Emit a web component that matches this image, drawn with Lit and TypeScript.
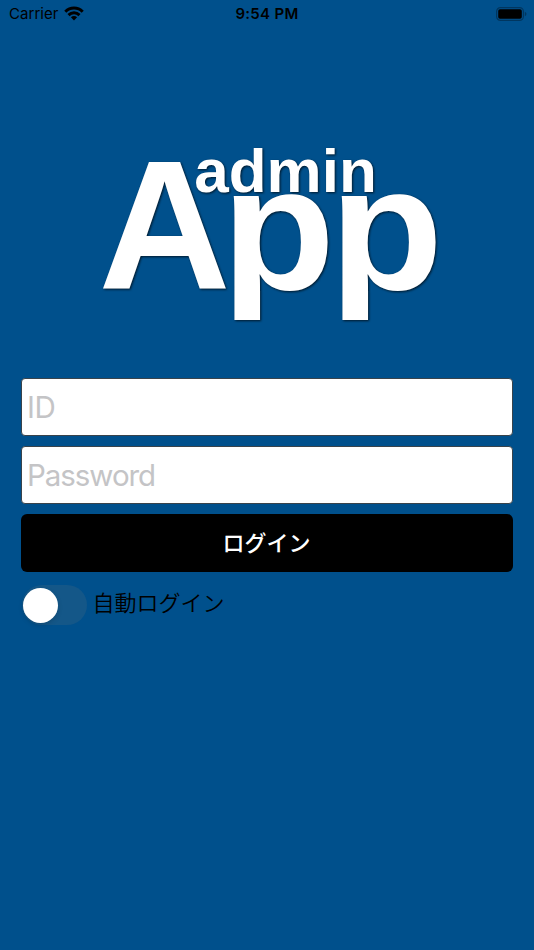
import { LitElement, html, css } from "lit";
import { customElement } from "lit/decorators.js";

@customElement("app-root")
export class AppRoot extends LitElement {
  static styles = css`
    :host {
      display: flex;
      flex-direction: column;
      box-sizing: border-box;
      height: 950px;
      background: #00508c;
      color: #000;
      font-family: Inter, "Noto Sans CJK JP", sans-serif;
    }
    .status {
      display: grid;
      grid-template-columns: 1fr auto 1fr;
      align-items: center;
      height: 28px;
      padding: 0 7px 0 9px;
      font-size: 15px;
      line-height: 28px;
    }
    .carrier {
      display: flex;
      align-items: center;
      gap: 5px;
      letter-spacing: 0.05px;
    }
    .carrier svg {
      margin-bottom: 2px;
    }
    .time {
      margin-right: 2px;
      font-weight: 600;
      letter-spacing: 0.3px;
    }
    .battery {
      justify-self: end;
      margin-bottom: 1px;
    }
    svg {
      display: block;
    }
    .logo {
      margin-top: 92px;
      fill: #fff;
      font-family: "Liberation Sans", sans-serif;
      font-weight: 700;
      filter: drop-shadow(1px 1.5px 1px rgba(0, 0, 0, 0.7));
    }
    .form {
      display: flex;
      flex-direction: column;
      gap: 10.5px;
      margin: 38px 21px 0;
    }
    input {
      box-sizing: border-box;
      width: 100%;
      height: 57.6px;
      margin: 0;
      padding: 0 5px;
      border: 1px solid #39434b;
      border-radius: 4px;
      background: #fff;
      font: 400 29.5px Inter, sans-serif;
      letter-spacing: -1.05px;
      outline: none;
    }
    .id {
      letter-spacing: -0.3px;
    }
    input::placeholder {
      color: #c4c4c6;
      opacity: 1;
    }
    button {
      height: 58px;
      margin: 0;
      padding: 0 1px 5px 0;
      border: 0;
      border-radius: 6px;
      background: #000;
      color: #fff;
      font: 500 22px "Noto Sans CJK JP", sans-serif;
    }
    .auto {
      display: flex;
      align-items: center;
      gap: 6px;
      height: 40px;
      margin: 13px 21.5px 0;
      font: 400 22px/40px "Noto Sans CJK JP", sans-serif;
    }
    .label {
      padding-bottom: 9px;
      font-weight: 350;
    }
    .switch {
      display: flex;
      align-items: center;
      box-sizing: border-box;
      width: 65px;
      height: 40px;
      padding: 0 1.5px;
      border-radius: 20px;
      background: #145788;
    }
    .knob {
      width: 35px;
      height: 35px;
      border-radius: 50%;
      background: #fff;
      box-shadow: 0 2px 5px rgba(0, 0, 0, 0.15);
    }
  `;

  render() {
    return html`
      <div class="status">
        <div class="carrier">
          <span>Carrier</span>
          <svg width="20" height="15" viewBox="0 0 20 15">
            <g fill="none" stroke="#000" stroke-width="3">
              <path d="M1.3 5.7C6.2.8 13.8.8 18.7 5.7" />
              <path d="M4.5 9.1C7.6 6.1 12.4 6.1 15.5 9.1" />
            </g>
            <path d="M6.9 11.3C8.7 9.7 11.3 9.7 13.1 11.3L10 14.5Z" />
          </svg>
        </div>
        <span class="time">9:54 PM</span>
        <svg class="battery" width="31" height="14" viewBox="0 0 31 14">
          <rect x=".6" y=".6" width="26.8" height="12.8" rx="3.8" fill="none" stroke="#00365f" stroke-width="1.2" />
          <rect x="2.2" y="2.2" width="23.6" height="9.6" rx="1.8" />
          <path d="M28.8 4.8Q30.5 5.5 30.5 7T28.8 9.2Z" fill="#00365f" />
        </svg>
      </div>

      <svg class="logo" width="534" height="220" viewBox="0 120 534 220">
        <clipPath id="descender">
          <rect x="0" y="120" width="534" height="200" />
        </clipPath>
        <text x="98.5" y="288" font-size="183">A</text>
        <g clip-path="url(#descender)">
          <text transform="translate(221.5 289.3) scale(1.017 .968)" font-size="183">p</text>
          <text transform="translate(329.5 289.3) scale(1.017 .968)" font-size="183">p</text>
        </g>
        <text x="194.3" y="191.7" font-size="62" textLength="182.5">admin</text>
      </svg>

      <div class="form">
        <input class="id" type="text" placeholder="ID" />
        <input type="password" placeholder="Password" />
        <button type="button">ログイン</button>
      </div>
      <div class="auto">
        <span class="switch"><span class="knob"></span></span>
        <span class="label">自動ログイン</span>
      </div>
    `;
  }
}
